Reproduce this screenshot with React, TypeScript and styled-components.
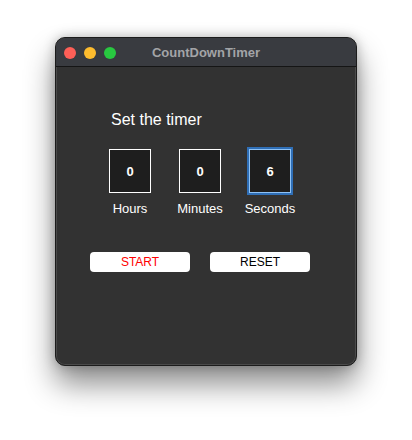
import styled, { createGlobalStyle } from "styled-components";

const GlobalStyle = createGlobalStyle`
  body {
    margin: 0;
    background: #ffffff;
    font-family: "Helvetica Neue", "Liberation Sans", Arial, sans-serif;
  }
`;

const Page = styled.div`
  width: 412px;
  height: 440px;
  display: flex;
  justify-content: center;
  padding-top: 37px;
  box-sizing: border-box;
`;

const Window = styled.div`
  width: 302px;
  height: 329px;
  border-radius: 10px;
  background: #323232;
  border: 1px solid #1c1c1c;
  box-sizing: border-box;
  box-shadow: inset 0 0 0 1px #4a4a4a, 0 18px 30px rgba(0, 0, 0, 0.45),
    0 0 12px rgba(0, 0, 0, 0.25);
  overflow: hidden;
  display: flex;
  flex-direction: column;
`;

const TitleBar = styled.div`
  position: relative;
  height: 28px;
  flex-shrink: 0;
  background: #393b40;
  border-bottom: 1px solid #151515;
  display: flex;
  align-items: center;
  justify-content: center;
`;

const Lights = styled.div`
  position: absolute;
  left: 8px;
  top: 9px;
  display: flex;
  gap: 8px;
`;

const Light = styled.span<{ $color: string }>`
  width: 12px;
  height: 12px;
  border-radius: 50%;
  background: ${(p) => p.$color};
`;

const Title = styled.div`
  font-size: 13px;
  font-weight: bold;
  color: #a3a4a7;
`;

const Body = styled.div`
  flex: 1;
  padding: 43px 0 0 53px;
  display: flex;
  flex-direction: column;
`;

const Heading = styled.div`
  color: #ffffff;
  font-size: 16px;
  margin-left: 2px;
  line-height: 20px;
`;

const Fields = styled.div`
  display: flex;
  gap: 28px;
  margin-top: 19px;
`;

const Field = styled.div`
  width: 42px;
  display: flex;
  flex-direction: column;
  align-items: center;
`;

const Box = styled.div<{ $focused?: boolean }>`
  width: 42px;
  height: 44px;
  box-sizing: border-box;
  background: #1e1e1e;
  border: 1px solid ${(p) => (p.$focused ? "#8fc2f5" : "#ffffff")};
  box-shadow: ${(p) => (p.$focused ? "0 0 0 2px #2f6fb7" : "none")};
  color: #ffffff;
  font-size: 13px;
  font-weight: bold;
  display: flex;
  align-items: center;
  justify-content: center;
`;

const Label = styled.div`
  color: #ffffff;
  font-size: 13px;
  margin-top: 8px;
  white-space: nowrap;
`;

const Buttons = styled.div`
  display: flex;
  gap: 20px;
  margin-top: 36px;
  margin-left: -19px;
`;

const Button = styled.button<{ $danger?: boolean }>`
  width: 100px;
  height: 20px;
  border: none;
  border-radius: 4px;
  background: #ffffff;
  color: ${(p) => (p.$danger ? "#ff0000" : "#000000")};
  font-family: inherit;
  font-size: 12px;
  padding: 0;
`;

const fields = [
  { label: "Hours", value: 0 },
  { label: "Minutes", value: 0 },
  { label: "Seconds", value: 6, focused: true },
];

const App = () => (
  <>
    <GlobalStyle />
    <Page>
      <Window>
        <TitleBar>
          <Lights>
            <Light $color="#fe5f57" />
            <Light $color="#febc2e" />
            <Light $color="#28c840" />
          </Lights>
          <Title>CountDownTimer</Title>
        </TitleBar>
        <Body>
          <Heading>Set the timer</Heading>
          <Fields>
            {fields.map((f) => (
              <Field key={f.label}>
                <Box $focused={f.focused}>{f.value}</Box>
                <Label>{f.label}</Label>
              </Field>
            ))}
          </Fields>
          <Buttons>
            <Button $danger>START</Button>
            <Button>RESET</Button>
          </Buttons>
        </Body>
      </Window>
    </Page>
  </>
);

export default App;
